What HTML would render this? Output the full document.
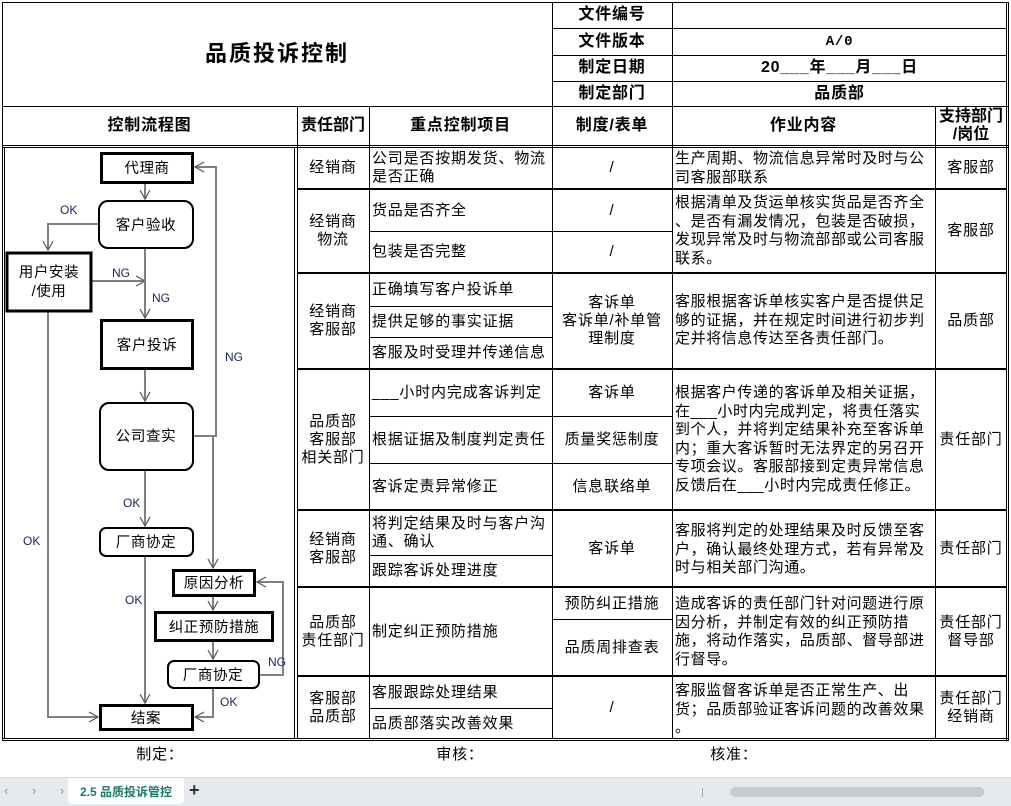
<!DOCTYPE html>
<html><head><meta charset="utf-8">
<style>
*{margin:0;padding:0;box-sizing:border-box}
body{width:1011px;height:806px;background:#fff;position:relative;overflow:hidden;font-family:"Liberation Sans","Noto Sans CJK SC",sans-serif;color:#000}
.h,.v{position:absolute;background:#000}
.c{position:absolute;display:flex;align-items:center;justify-content:center;text-align:center;font-size:15px;line-height:18px;letter-spacing:0.8px}
.l{justify-content:flex-start;text-align:left;padding-left:3px}
.b{font-weight:bold;font-size:16px}
.w{position:absolute;font-size:15px;line-height:18.5px;text-align:left;letter-spacing:0.6px;white-space:nowrap;overflow:hidden}
</style></head><body>
<div class="h" style="left:2px;top:2px;width:1006px;height:1px"></div>
<div class="h" style="left:552px;top:28px;width:455px;height:1px"></div>
<div class="h" style="left:552px;top:55px;width:455px;height:1px"></div>
<div class="h" style="left:552px;top:81px;width:455px;height:1px"></div>
<div class="h" style="left:2px;top:106px;width:1006px;height:1px"></div>
<div class="h" style="left:2px;top:145px;width:1006px;height:1px"></div>
<div class="h" style="left:2px;top:147px;width:1006px;height:1px"></div>
<div class="h" style="left:297px;top:188px;width:710px;height:2px"></div>
<div class="h" style="left:369px;top:231px;width:183px;height:1px"></div>
<div class="h" style="left:552px;top:231px;width:120px;height:1px"></div>
<div class="h" style="left:297px;top:272px;width:710px;height:2px"></div>
<div class="h" style="left:369px;top:306px;width:183px;height:1px"></div>
<div class="h" style="left:369px;top:337px;width:183px;height:1px"></div>
<div class="h" style="left:297px;top:368px;width:710px;height:2px"></div>
<div class="h" style="left:369px;top:416px;width:303px;height:1px"></div>
<div class="h" style="left:369px;top:463px;width:303px;height:1px"></div>
<div class="h" style="left:297px;top:509px;width:710px;height:2px"></div>
<div class="h" style="left:369px;top:555px;width:183px;height:1px"></div>
<div class="h" style="left:297px;top:586px;width:710px;height:2px"></div>
<div class="h" style="left:552px;top:619px;width:120px;height:1px"></div>
<div class="h" style="left:297px;top:675px;width:710px;height:2px"></div>
<div class="h" style="left:369px;top:708px;width:183px;height:1px"></div>
<div class="h" style="left:2px;top:738px;width:1006px;height:1px"></div>
<div class="h" style="left:2px;top:740px;width:1006px;height:1px"></div>
<div class="v" style="left:2px;top:2px;width:1px;height:739px"></div>
<div class="v" style="left:297px;top:106px;width:1px;height:633px"></div>
<div class="v" style="left:369px;top:106px;width:1px;height:633px"></div>
<div class="v" style="left:552px;top:2px;width:1px;height:737px"></div>
<div class="v" style="left:672px;top:2px;width:1px;height:737px"></div>
<div class="v" style="left:935px;top:106px;width:1px;height:633px"></div>
<div class="v" style="left:1006px;top:2px;width:1px;height:739px"></div>
<div class="v" style="left:1008px;top:2px;width:1px;height:739px"></div>
<div class="v" style="left:4px;top:147px;width:1px;height:592px"></div>
<div class="v" style="left:294px;top:147px;width:1px;height:592px"></div>

<div class="c" style="left:2px;top:2px;width:550px;height:104px;font-size:22px;font-weight:bold;letter-spacing:2px">品质投诉控制</div>
<div class="c b" style="left:552px;top:2px;width:120px;height:26px">文件编号</div>
<div class="c b" style="left:552px;top:28px;width:120px;height:27px">文件版本</div>
<div class="c b" style="left:552px;top:55px;width:120px;height:26px">制定日期</div>
<div class="c b" style="left:552px;top:81px;width:120px;height:25px">制定部门</div>
<div class="c b" style="left:672px;top:28px;width:335px;height:27px;font-family:'Liberation Mono',monospace;font-size:14px">A/0</div>
<div class="c b" style="left:672px;top:55px;width:335px;height:26px">20___年___月___日</div>
<div class="c b" style="left:672px;top:81px;width:335px;height:25px">品质部</div>
<div class="c b" style="left:2px;top:106px;width:295px;height:40px">控制流程图</div>
<div class="c b" style="left:297px;top:106px;width:72px;height:40px;letter-spacing:0">责任部门</div>
<div class="c b" style="left:369px;top:106px;width:183px;height:40px">重点控制项目</div>
<div class="c b" style="left:552px;top:106px;width:120px;height:40px">制度/表单</div>
<div class="c b" style="left:672px;top:106px;width:263px;height:40px">作业内容</div>
<div class="c b" style="left:935px;top:106px;width:72px;height:40px;line-height:18px;letter-spacing:0">支持部门<br>/岗位</div>

<div class="c" style="left:297px;top:148px;width:72px;height:40px">经销商</div>
<div class="c l" style="left:369px;top:148px;width:183px;height:40px;white-space:nowrap">公司是否按期发货、物流<br>是否正确</div>
<div class="c" style="left:552px;top:148px;width:120px;height:40px">/</div>
<div class="w" style="left:675px;top:150px;width:260px">生产周期、物流信息异常时及时与公<br>司客服部联系</div>
<div class="c" style="left:935px;top:148px;width:72px;height:40px">客服部</div>

<div class="c" style="left:297px;top:190px;width:72px;height:82px">经销商<br>物流</div>
<div class="c l" style="left:369px;top:190px;width:183px;height:41px">货品是否齐全</div>
<div class="c l" style="left:369px;top:232px;width:183px;height:40px">包装是否完整</div>
<div class="c" style="left:552px;top:190px;width:120px;height:41px">/</div>
<div class="c" style="left:552px;top:232px;width:120px;height:40px">/</div>
<div class="w" style="left:675px;top:194px;width:260px">根据清单及货运单核实货品是否齐全<br>、是否有漏发情况，包装是否破损，<br>发现异常及时与物流部部或公司客服<br>联系。</div>
<div class="c" style="left:935px;top:190px;width:72px;height:82px">客服部</div>

<div class="c" style="left:297px;top:274px;width:72px;height:94px">经销商<br>客服部</div>
<div class="c l" style="left:369px;top:274px;width:183px;height:32px">正确填写客户投诉单</div>
<div class="c l" style="left:369px;top:307px;width:183px;height:30px">提供足够的事实证据</div>
<div class="c l" style="left:369px;top:338px;width:183px;height:30px">客服及时受理并传递信息</div>
<div class="c" style="left:552px;top:274px;width:120px;height:94px">客诉单<br>客诉单/补单管<br>理制度</div>
<div class="w" style="left:675px;top:293px;width:260px">客服根据客诉单核实客户是否提供足<br>够的证据，并在规定时间进行初步判<br>定并将信息传达至各责任部门。</div>
<div class="c" style="left:935px;top:274px;width:72px;height:94px">品质部</div>

<div class="c" style="left:297px;top:370px;width:72px;height:139px">品质部<br>客服部<br>相关部门</div>
<div class="c l" style="left:369px;top:370px;width:183px;height:46px">___小时内完成客诉判定</div>
<div class="c l" style="left:369px;top:417px;width:183px;height:46px">根据证据及制度判定责任</div>
<div class="c l" style="left:369px;top:464px;width:183px;height:45px">客诉定责异常修正</div>
<div class="c" style="left:552px;top:370px;width:120px;height:46px">客诉单</div>
<div class="c" style="left:552px;top:417px;width:120px;height:46px">质量奖惩制度</div>
<div class="c" style="left:552px;top:464px;width:120px;height:45px">信息联络单</div>
<div class="w" style="left:675px;top:384px;width:260px">根据客户传递的客诉单及相关证据，<br>在___小时内完成判定，将责任落实<br>到个人，并将判定结果补充至客诉单<br>内；重大客诉暂时无法界定的另召开<br>专项会议。客服部接到定责异常信息<br>反馈后在___小时内完成责任修正。</div>
<div class="c" style="left:935px;top:370px;width:72px;height:139px">责任部门</div>

<div class="c" style="left:297px;top:511px;width:72px;height:75px">经销商<br>客服部</div>
<div class="c l" style="left:369px;top:511px;width:183px;height:44px">将判定结果及时与客户沟通、确认</div>
<div class="c l" style="left:369px;top:556px;width:183px;height:30px">跟踪客诉处理进度</div>
<div class="c" style="left:552px;top:511px;width:120px;height:75px">客诉单</div>
<div class="w" style="left:675px;top:522px;width:260px">客服将判定的处理结果及时反馈至客<br>户，确认最终处理方式，若有异常及<br>时与相关部门沟通。</div>
<div class="c" style="left:935px;top:511px;width:72px;height:75px">责任部门</div>

<div class="c" style="left:297px;top:588px;width:72px;height:87px">品质部<br>责任部门</div>
<div class="c l" style="left:369px;top:588px;width:183px;height:87px">制定纠正预防措施</div>
<div class="c" style="left:552px;top:588px;width:120px;height:31px">预防纠正措施</div>
<div class="c" style="left:552px;top:620px;width:120px;height:55px">品质周排查表</div>
<div class="w" style="left:675px;top:595px;width:260px">造成客诉的责任部门针对问题进行原<br>因分析，并制定有效的纠正预防措<br>施，将动作落实，品质部、督导部进<br>行督导。</div>
<div class="c" style="left:935px;top:588px;width:72px;height:87px">责任部门<br>督导部</div>

<div class="c" style="left:297px;top:677px;width:72px;height:61px">客服部<br>品质部</div>
<div class="c l" style="left:369px;top:677px;width:183px;height:31px">客服跟踪处理结果</div>
<div class="c l" style="left:369px;top:709px;width:183px;height:29px">品质部落实改善效果</div>
<div class="c" style="left:552px;top:677px;width:120px;height:61px">/</div>
<div class="w" style="left:675px;top:682px;width:260px">客服监督客诉单是否正常生产、出<br>货；品质部验证客诉问题的改善效果<br>。</div>
<div class="c" style="left:935px;top:677px;width:72px;height:61px">责任部门<br>经销商</div>

<svg style="position:absolute;left:0;top:0" width="300" height="740" font-family="Liberation Sans, Noto Sans CJK SC, sans-serif">
<defs><marker id="a" markerWidth="12" markerHeight="12" refX="10" refY="6" orient="auto" markerUnits="userSpaceOnUse"><path d="M1 1 L10 6 L1 11" fill="none" stroke="#555" stroke-width="1.2"/></marker></defs>
<g stroke="#808080" stroke-width="2" fill="none">
<path d="M145 183 V199" marker-end="url(#a)"/>
<path d="M99 224 H48 V250" marker-end="url(#a)"/>
<path d="M91 281 H145" marker-end="url(#a)"/>
<path d="M145 248 V318" marker-end="url(#a)"/>
<path d="M145 369 V401" marker-end="url(#a)"/>
<path d="M193 436 H216 V167 H195" marker-end="url(#a)"/>
<path d="M213 436 V568" marker-end="url(#a)"/>
<path d="M145 470 V526" marker-end="url(#a)"/>
<path d="M145 556 V703" marker-end="url(#a)"/>
<path d="M48 311 V717 H98" marker-end="url(#a)"/>
<path d="M213 596 V610" marker-end="url(#a)"/>
<path d="M213 641 V659" marker-end="url(#a)"/>
<path d="M259 675 H283 V582 H257" marker-end="url(#a)"/>
<path d="M213 688 V717 H195" marker-end="url(#a)"/>
</g>
<g fill="#fff" stroke="#000">
<rect x="101.5" y="153.5" width="91" height="29" stroke-width="3"/>
<rect x="99" y="201" width="94" height="47" rx="9" stroke-width="2"/>
<rect x="7" y="253" width="84" height="58" stroke-width="3"/>
<rect x="101.5" y="320.5" width="91" height="48" stroke-width="3"/>
<rect x="100" y="403" width="93" height="67" rx="9" stroke-width="2"/>
<rect x="100" y="528" width="93" height="28" rx="6" stroke-width="2"/>
<rect x="100.5" y="705.5" width="92" height="24" stroke-width="3"/>
<rect x="173.5" y="570.5" width="81" height="25" stroke-width="3"/>
<rect x="155.5" y="612.5" width="117" height="28" stroke-width="3"/>
<rect x="168" y="661" width="91" height="27" rx="6" stroke-width="2"/>
</g>
<g font-size="14.5" text-anchor="middle" fill="#000" letter-spacing="0.6">
<text x="147" y="173">代理商</text>
<text x="146" y="230">客户验收</text>
<text x="49" y="277">用户安装</text>
<text x="49" y="296">/使用</text>
<text x="147" y="350">客户投诉</text>
<text x="146" y="441">公司查实</text>
<text x="146" y="547">厂商协定</text>
<text x="146" y="723">结案</text>
<text x="214" y="588">原因分析</text>
<text x="214" y="632">纠正预防措施</text>
<text x="213" y="680">厂商协定</text>
</g>
<g font-size="12" fill="#1a2a60">
<text x="60" y="214">OK</text>
<text x="112" y="277">NG</text>
<text x="152" y="302">NG</text>
<text x="225" y="361">NG</text>
<text x="123" y="507">OK</text>
<text x="23" y="545">OK</text>
<text x="125" y="604">OK</text>
<text x="268" y="666">NG</text>
<text x="220" y="706">OK</text>
</g>
</svg>

<div class="c" style="left:130px;top:744px;width:60px;height:22px">制定：</div>
<div class="c" style="left:430px;top:744px;width:60px;height:22px">审核：</div>
<div class="c" style="left:704px;top:744px;width:60px;height:22px">核准：</div>
<div style="position:absolute;left:0;top:777px;width:1011px;height:29px;background:#e6e9ee;border-top:1px solid #d4d7dc"></div>
<div style="position:absolute;left:4px;top:783px;font-size:13px;color:#999;letter-spacing:10px">‹ › ›|</div>
<div style="position:absolute;left:68px;top:778px;width:116px;height:26px;background:#fff;border-radius:0 0 4px 4px;font-size:12px;font-weight:bold;color:#1a7a6a;display:flex;align-items:center;justify-content:center">2.5 品质投诉管控</div>
<div style="position:absolute;left:189px;top:780px;font-size:18px;font-weight:bold;color:#333">+</div>
<div style="position:absolute;left:702px;top:788px;width:1px;height:9px;background:#aaa"></div>
<div style="position:absolute;left:730px;top:787px;width:254px;height:10px;background:#c8cacd;border-radius:5px"></div>
</body></html>
